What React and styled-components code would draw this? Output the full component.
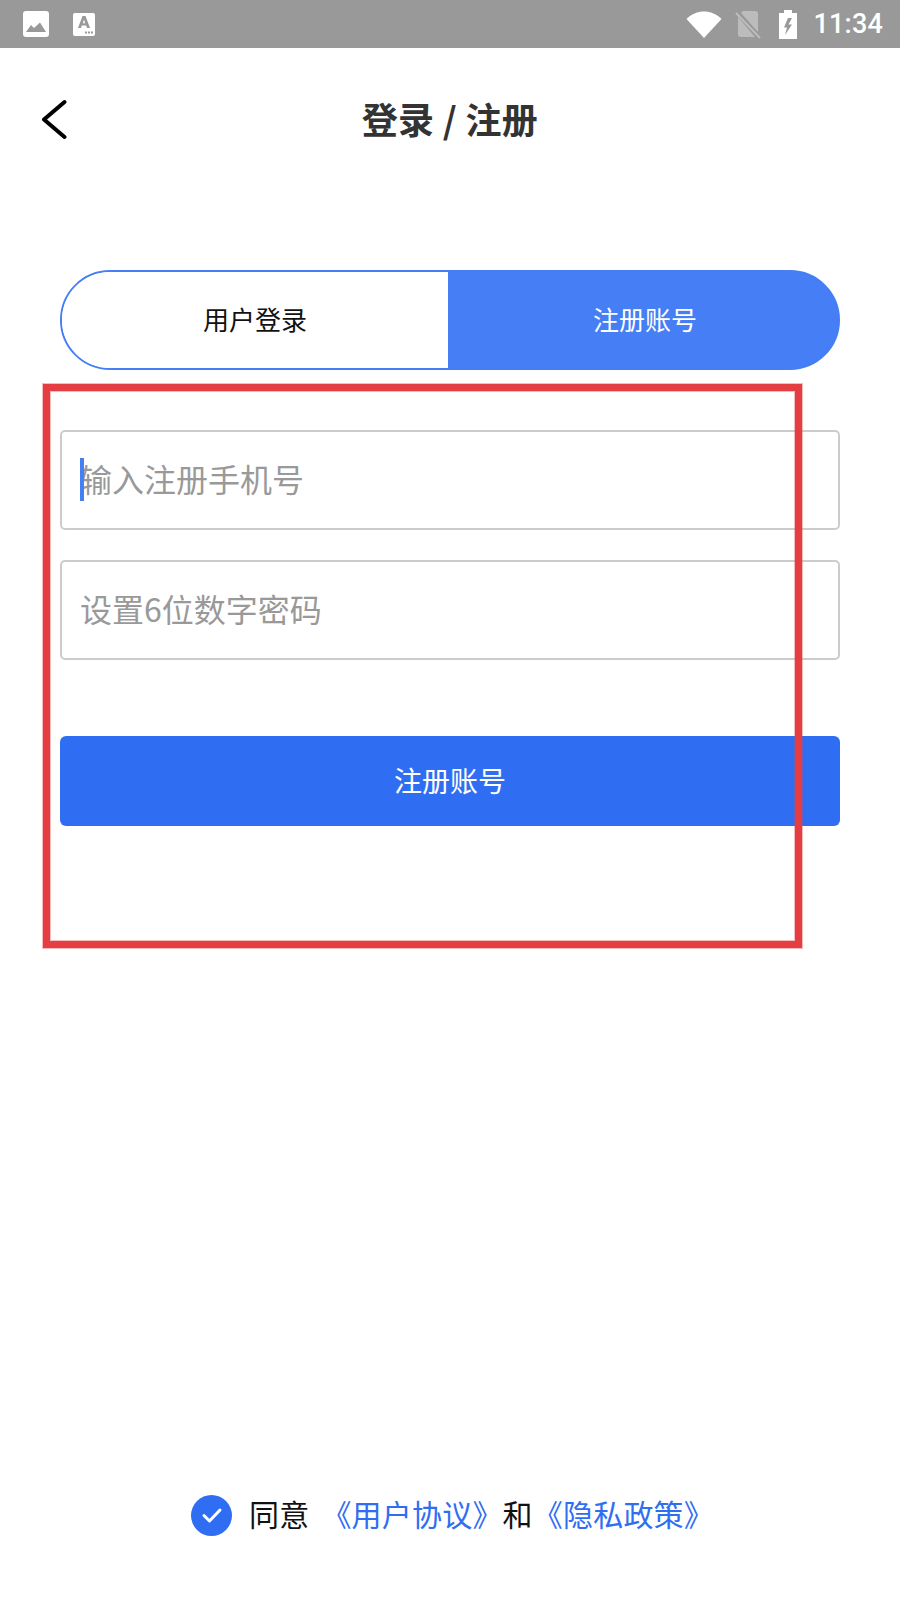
import React from "react";
import styled, { createGlobalStyle } from "styled-components";

const Global = createGlobalStyle`
  html, body { margin: 0; padding: 0; background: #fff; }
  * { box-sizing: border-box; }
  body { font-family: "Noto Sans CJK SC", "Noto Sans", sans-serif; }
`;

const Page = styled.div`
  position: relative;
  width: 900px;
  height: 1600px;
  display: flex;
  flex-direction: column;
  background: #fff;
  overflow: hidden;
`;

const StatusBar = styled.div`
  height: 48px;
  background: #999999;
  display: flex;
  align-items: center;
  padding: 0 17px 0 23px;
  flex-shrink: 0;
`;
const StatusLeft = styled.div`
  display: flex;
  align-items: center;
  gap: 24px;
`;
const StatusRight = styled.div`
  margin-left: auto;
  display: flex;
  align-items: center;
`;
const Clock = styled.span`
  font-family: Roboto, sans-serif;
  font-size: 27px;
  font-weight: 500;
  color: #fff;
  letter-spacing: 0.2px;
  margin-left: 16px;
  line-height: 48px;
`;
const Glyph = styled.svg`
  display: block;
  flex-shrink: 0;
  margin-left: ${(p) => p.$gap || 0}px;
`;

const Header = styled.header`
  height: 144px;
  display: grid;
  grid-template-columns: 1fr auto 1fr;
  align-items: center;
  padding-left: 41px;
  padding-right: 41px;
  flex-shrink: 0;
`;
const Title = styled.h1`
  margin: 0 0 4px;
  font-size: 36px;
  font-weight: 700;
  letter-spacing: 0.3px;
  color: #333;
  line-height: 50px;
`;

const Content = styled.main`
  padding: 78px 60px 0;
  display: flex;
  flex-direction: column;
`;
const Toggle = styled.div`
  height: 100px;
  display: flex;
  border-radius: 50px;
  border: 2px solid #457ef5;
  background: linear-gradient(90deg, #fff 50%, #457ef5 50%);
  overflow: hidden;
`;
const Tab = styled.div`
  flex: 0 0 ${(p) => p.$w}px;
  display: flex;
  align-items: center;
  justify-content: center;
  padding: 0 0 4px ${(p) => (p.$active ? 2 : 0)}px;
  font-size: 26px;
  background: ${(p) => (p.$active ? "#457ef5" : "#fff")};
  color: ${(p) => (p.$active ? "#fff" : "#111")};
`;

const Form = styled.form`
  margin-top: 60px;
  display: flex;
  flex-direction: column;
  gap: 30px;
`;
const Field = styled.div`
  position: relative;
  height: 100px;
`;
const Input = styled.input`
  display: block;
  width: 100%;
  height: 100%;
  border: 2px solid #cccccc;
  border-radius: 5px;
  padding: 0 18px 4px;
  outline: none;
  background: transparent;
  font-family: inherit;
  font-size: 32px;
  color: #333;
  &::placeholder { color: #999; opacity: 1; }
`;
const Caret = styled.span`
  position: absolute;
  left: 20px;
  top: 28px;
  width: 4px;
  height: 43px;
  background: #457ef5;
`;
const Submit = styled.button`
  margin-top: 46px;
  height: 90px;
  border: 0;
  border-radius: 6px;
  padding: 0 0 2px;
  background: #2f6ef2;
  color: #fff;
  font-family: inherit;
  font-size: 28px;
`;

const Footer = styled.footer`
  margin-top: auto;
  padding: 0 0 62px 191px;
  display: flex;
  align-items: center;
  font-size: 30px;
  line-height: 42px;
  color: #111;
`;
const Check = styled.span`
  width: 41px;
  height: 41px;
  border-radius: 50%;
  background: #2f6ef2;
  display: flex;
  align-items: center;
  justify-content: center;
  margin-right: 17px;
`;
const Terms = styled.span`
  display: flex;
  padding-bottom: 4px;
  letter-spacing: 0.2px;
`;
const Agree = styled.span`
  margin-right: 12px;
`;
const Link = styled.span`
  color: #2f6ef2;
`;

const Annotation = styled.div`
  position: absolute;
  left: 43px;
  top: 384px;
  width: 759px;
  height: 564px;
  border: 7px solid #e53e42;
  box-shadow: 0 0 0 1px rgba(229, 62, 66, 0.35), inset 0 0 0 1px rgba(229, 62, 66, 0.35);
  pointer-events: none;
`;

export default function App() {
  return (
    <Page>
      <Global />
      <StatusBar>
        <StatusLeft>
          <Glyph width="26" height="26" viewBox="0 0 26 26">
            <rect width="26" height="26" rx="3" fill="#fff" />
            <path d="M3 21 L8 14 L11 17 L17 11.5 L23 21 Z" fill="#999" />
          </Glyph>
          <Glyph width="22" height="23" viewBox="0 0 22 23">
            <rect width="22" height="23" rx="2" fill="#fff" />
            <path d="M5 15 L9.5 3 h3 L17 15 h-3 l-0.8-2.4 h-4.4 L8 15 Z M9.8 10.2 h2.4 L11 6.5 Z" fill="#999" fillRule="evenodd" />
            <rect x="12" y="18.5" width="2" height="2" fill="#999" />
            <rect x="15" y="18.5" width="2" height="2" fill="#999" />
            <rect x="18" y="18.5" width="2" height="2" fill="#999" />
          </Glyph>
        </StatusLeft>
        <StatusRight>
          <Glyph width="36" height="27" viewBox="0 0 36 27">
            <path d="M0.5 8 C10 -2 26 -2 35.5 8 L18 27 Z" fill="#fff" />
          </Glyph>
          <Glyph $gap={13} width="26" height="29" viewBox="0 0 26 29">
            <path d="M8 1 H20 a3 3 0 0 1 3 3 V22 L6 3 Z M3 7 L20 27 H6 a3 3 0 0 1-3-3 Z" fill="#fff" fillOpacity="0.35" />
            <path d="M1 3 L25 28" stroke="#fff" strokeOpacity="0.35" strokeWidth="2" />
          </Glyph>
          <Glyph $gap={18} width="18" height="29" viewBox="0 0 18 29">
            <path fillRule="evenodd" d="M5 0 H13 V3 H18 V29 H0 V3 H5 Z M9 8 L5 17.5 H8 L6 25 L13 14.5 H9.5 L13 8 Z" fill="#fff" />
          </Glyph>
          <Clock>11:34</Clock>
        </StatusRight>
      </StatusBar>

      <Header>
        <Glyph width="26" height="42" viewBox="0 0 26 42">
          <path d="M23.5 3 L3 20.5 L23.5 38" fill="none" stroke="#000" strokeWidth="4" strokeLinecap="round" strokeLinejoin="round" />
        </Glyph>
        <Title>登录 / 注册</Title>
      </Header>

      <Content>
        <Toggle>
          <Tab $w={386}>用户登录</Tab>
          <Tab $active $w={392}>注册账号</Tab>
        </Toggle>
        <Form>
          <Field>
            <Input placeholder="输入注册手机号" />
            <Caret />
          </Field>
          <Field>
            <Input placeholder="设置6位数字密码" />
          </Field>
          <Submit type="button">注册账号</Submit>
        </Form>
      </Content>

      <Footer>
        <Check>
          <svg width="22" height="18" viewBox="0 0 22 18">
            <path d="M3 9.5 L8.5 15 L19 4" fill="none" stroke="#fff" strokeWidth="3" strokeLinecap="round" strokeLinejoin="round" />
          </svg>
        </Check>
        <Terms>
          <Agree>同意</Agree>
          <Link>《用户协议》</Link>
          <span>和</span>
          <Link>《隐私政策》</Link>
        </Terms>
      </Footer>

      <Annotation />
    </Page>
  );
}
